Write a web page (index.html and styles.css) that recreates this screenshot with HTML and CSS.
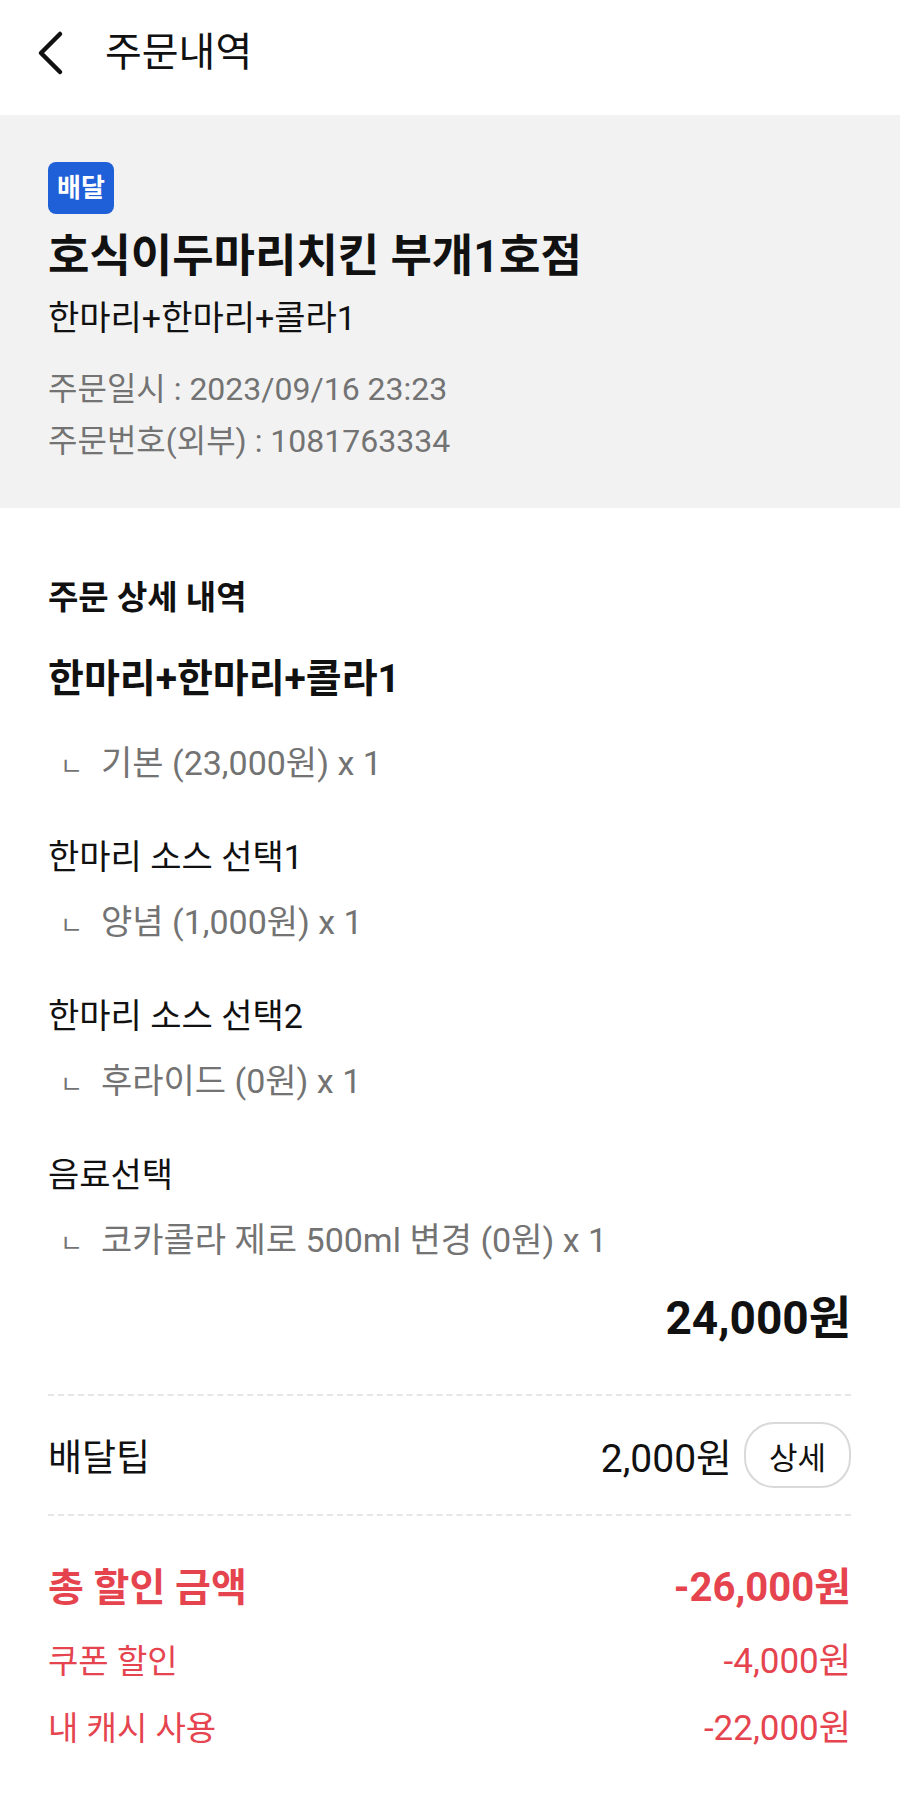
FILE: index.html
```html
<!DOCTYPE html>
<html lang="ko">

<head>
    <meta charset="UTF-8">
    <meta name="viewport" content="width=device-width, initial-scale=1.0">
    <title>주문내역</title>
    <link rel="stylesheet" href="styles.css">
</head>

<body>
    <header class="topbar">
        <a class="back" href="#">
            <svg width="28" height="46" viewBox="0 0 28 46">
                <path d="M24 4 L5 23 L24 42" fill="none" stroke="#111" stroke-width="4.5" stroke-linecap="round" stroke-linejoin="round" />
            </svg>
        </a>
        <h1>주문내역</h1>
    </header>

    <section class="store-info">
        <span class="badge">배달</span>
        <h2 class="store-name">호식이두마리치킨 부개1호점</h2>
        <p class="menu-summary">한마리+한마리+콜라1</p>
        <p class="meta">주문일시 : 2023/09/16 23:23</p>
        <p class="meta">주문번호(외부) : 1081763334</p>
    </section>

    <section class="detail">
        <h3>주문 상세 내역</h3>
        <p class="product">한마리+한마리+콜라1</p>

        <ul class="options">
            <li class="opt-first">
                <p class="opt-sub"><span class="mark">ㄴ</span>기본 (23,000원) x 1</p>
            </li>
            <li>
                <p class="opt-name">한마리 소스 선택1</p>
                <p class="opt-sub"><span class="mark">ㄴ</span>양념 (1,000원) x 1</p>
            </li>
            <li>
                <p class="opt-name">한마리 소스 선택2</p>
                <p class="opt-sub"><span class="mark">ㄴ</span>후라이드 (0원) x 1</p>
            </li>
            <li>
                <p class="opt-name">음료선택</p>
                <p class="opt-sub"><span class="mark">ㄴ</span>코카콜라 제로 500ml 변경 (0원) x 1</p>
            </li>
        </ul>

        <p class="subtotal">24,000원</p>

        <hr class="dash">

        <div class="tip-row">
            <span>배달팁</span>
            <div class="tip-right">
                <span class="tip-amount">2,000원</span>
                <button class="btn-detail">상세</button>
            </div>
        </div>

        <hr class="dash">

        <div class="discount">
            <div class="disc-row disc-total">
                <span>총 할인 금액</span>
                <span class="amount">-26,000원</span>
            </div>
            <div class="disc-row">
                <span>쿠폰 할인</span>
                <span class="amount">-4,000원</span>
            </div>
            <div class="disc-row">
                <span>내 캐시 사용</span>
                <span class="amount">-22,000원</span>
            </div>
        </div>
    </section>
</body>

</html>
```

FILE: styles.css
```css
* {
    margin: 0;
    padding: 0;
    box-sizing: border-box;
}

body {
    font-family: Roboto, "Noto Sans CJK KR", sans-serif;
    background-color: #fff;
    color: #111;
}

.topbar {
    height: 115px;
    display: flex;
    align-items: center;
    padding-left: 36px;
    padding-bottom: 10px;
}

.back {
    display: flex;
    width: 28px;
}

.topbar h1 {
    font-size: 40px;
    font-weight: 400;
    line-height: 50px;
    margin-left: 41px;
}

.store-info {
    background-color: #f2f2f2;
    padding: 47px 48px 41px;
}

.badge {
    display: inline-block;
    height: 52px;
    line-height: 52px;
    padding: 0 9px;
    border-radius: 8px;
    background-color: #1f5fd8;
    color: #fff;
    font-size: 26px;
    font-weight: 700;
}

.store-name {
    font-size: 45px;
    font-weight: 700;
    line-height: 56px;
    margin-top: 15px;
}

.menu-summary {
    font-size: 34px;
    line-height: 44px;
    margin-top: 11px;
}

.meta {
    font-size: 32px;
    line-height: 52px;
    color: #737373;
}

.menu-summary + .meta {
    margin-top: 23px;
}

.detail {
    padding: 70px 49px 40px 48px;
}

.detail h3 {
    font-size: 33px;
    font-weight: 700;
    line-height: 40px;
}

.product {
    font-size: 39px;
    font-weight: 700;
    line-height: 48px;
    margin-top: 37px;
}

.options {
    list-style: none;
}

.options li {
    margin-top: 46px;
}

.options li.opt-first {
    margin-top: 36px;
}

.opt-name,
.opt-sub {
    font-size: 34px;
    line-height: 48px;
}

.opt-name + .opt-sub {
    margin-top: 17px;
}

.opt-sub {
    color: #737373;
}

.mark {
    display: inline-block;
    width: 53px;
    padding-left: 12px;
    font-size: 25px;
    line-height: 1;
}

.subtotal {
    text-align: right;
    font-size: 46px;
    font-weight: 700;
    line-height: 50px;
    margin-top: 29px;
}

.dash {
    border: none;
    border-top: 2px dashed #e6e6e6;
    margin-top: 51px;
}

.tip-row {
    display: flex;
    justify-content: space-between;
    align-items: center;
    height: 66px;
    margin: 26px 0;
    font-size: 37px;
}

.tip-right {
    display: flex;
    align-items: center;
    gap: 12px;
}

.tip-amount {
    font-size: 39px;
}

.btn-detail {
    width: 107px;
    height: 66px;
    border: 2px solid #d9d9d9;
    border-radius: 30px;
    background-color: #fff;
    font-family: inherit;
    font-size: 31px;
    color: #111;
}

.tip-row + .dash {
    margin-top: 0;
}

.discount {
    margin-top: 48px;
    color: #e5444f;
}

.disc-row {
    display: flex;
    justify-content: space-between;
    align-items: center;
    font-size: 33px;
    line-height: 48px;
    margin-top: 19px;
}

.disc-row .amount {
    font-size: 35px;
}

.disc-row.disc-total {
    font-size: 39px;
    font-weight: 700;
    margin-top: 0;
    margin-bottom: 26px;
}

.disc-row.disc-total .amount {
    font-size: 40px;
}
```
